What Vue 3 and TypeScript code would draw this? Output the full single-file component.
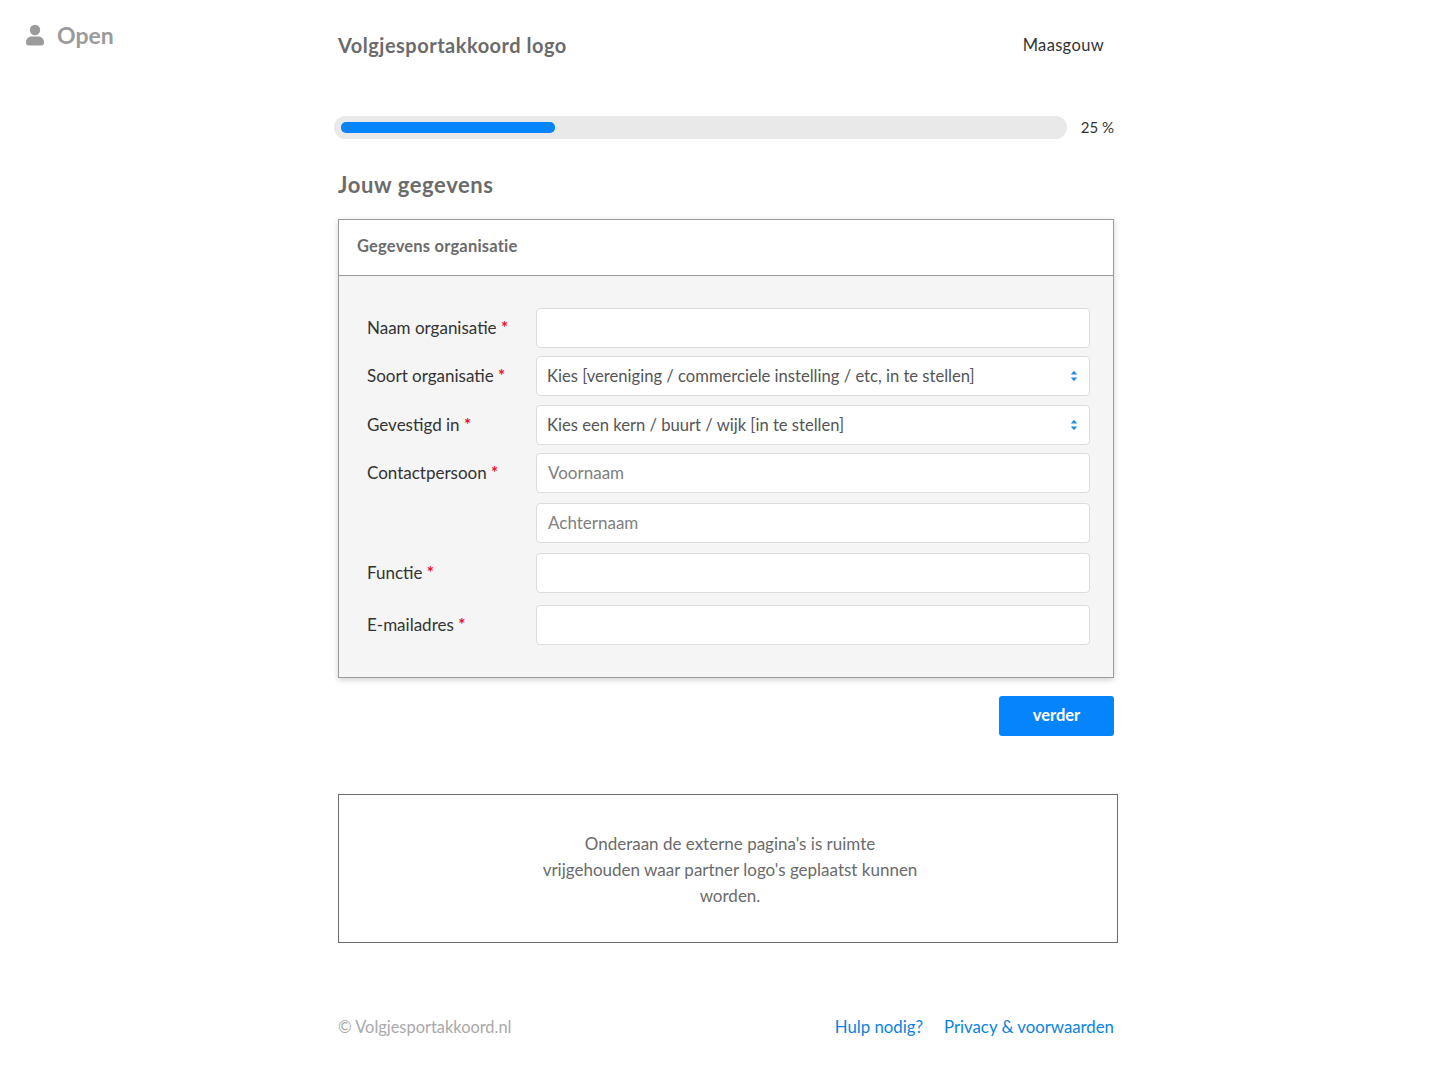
<script setup lang="ts">
interface Field {
  label?: string;
  type: 'text' | 'select';
  placeholder?: string;
  value?: string;
}

const fields: Field[] = [
  { label: 'Naam organisatie', type: 'text' },
  { label: 'Soort organisatie', type: 'select', value: 'Kies [vereniging / commerciele instelling / etc, in te stellen]' },
  { label: 'Gevestigd in', type: 'select', value: 'Kies een kern / buurt / wijk [in te stellen]' },
  { label: 'Contactpersoon', type: 'text', placeholder: 'Voornaam' },
  { type: 'text', placeholder: 'Achternaam' },
  { label: 'Functie', type: 'text' },
  { label: 'E-mailadres', type: 'text' },
];

const progress = 25;
</script>

<template>
  <div class="page">
    <a class="open" href="#">
      <svg class="open-icon" viewBox="0 0 20 22" width="20" height="22">
        <circle cx="10" cy="6" r="5.2" />
        <path d="M1 18.500C1 14.500 4 12.500 6.500 12.500h7c2.500 0 5.500 2 5.500 6v.5c0 1.500-1 2.500-2.500 2.500h-13C2 21.500 1 20.500 1 19z" />
      </svg>
      Open
    </a>

    <div class="wrap">
      <header class="top">
        <span class="logo">Volgjesportakkoord logo</span>
        <span class="region">Maasgouw</span>
      </header>

      <div class="progress-row">
        <div class="progress">
          <div class="progress-bar" :style="{ width: `${progress * 1.19}%` }"></div>
        </div>
        <span class="progress-label">{{ progress }} %</span>
      </div>

      <h1 class="title">Jouw gegevens</h1>

      <section class="card">
        <h2 class="card-head">Gegevens organisatie</h2>
        <form class="card-body" @submit.prevent>
          <div v-for="(field, i) in fields" :key="i" class="row">
            <label class="label">
              <template v-if="field.label">{{ field.label }} <span class="req">*</span></template>
            </label>
            <div v-if="field.type === 'select'" class="select-wrap">
              <select class="control select">
                <option>{{ field.value }}</option>
              </select>
              <svg class="select-arrows" viewBox="0 0 8 12" width="8" height="12">
                <path d="M4 .8 7.200 4.600H.8z" />
                <path d="M4 11.200 .8 7.400h6.400z" />
              </svg>
            </div>
            <input v-else class="control" type="text" :placeholder="field.placeholder" />
          </div>
        </form>
      </section>

      <div class="actions">
        <button class="next" type="button">verder</button>
      </div>

      <div class="partners">
        <p>Onderaan de externe pagina's is ruimte<br />vrijgehouden waar partner logo's geplaatst kunnen<br />worden.</p>
      </div>

      <footer class="foot">
        <span class="copy">© Volgjesportakkoord.nl</span>
        <nav class="foot-links">
          <a href="#">Hulp nodig?</a>
          <a href="#">Privacy &amp; voorwaarden</a>
        </nav>
      </footer>
    </div>
  </div>
</template>

<style>
html, body {
  background: #fff;
}
</style>

<style scoped>
.page {
  position: relative;
  height: 1074px;
  font-family: Lato, "Open Sans", sans-serif;
  font-size: 17px;
  color: #333;
}
.open {
  position: absolute;
  left: 25px;
  top: 23px;
  display: flex;
  align-items: center;
  gap: 12px;
  font-size: 23px;
  line-height: 24px;
  font-weight: 700;
  color: #9b9b9b;
  text-decoration: none;
}
.open-icon {
  fill: #9b9b9b;
}
.wrap {
  width: 776px;
  margin-left: 338px;
}
.top {
  display: flex;
  justify-content: space-between;
  align-items: center;
  height: 90px;
  padding-right: 10px;
  padding-bottom: 2px;
}
.logo {
  font-size: 20px;
  font-weight: 700;
  letter-spacing: 0.5px;
  color: #6b6b6b;
}
.region {
  font-size: 16.500px;
  letter-spacing: 0.35px;
  color: #333;
}
.progress-row {
  display: flex;
  align-items: center;
  margin-left: -4px;
  height: 23px;
  margin-top: 24px;
}
.progress {
  width: 733px;
  height: 23px;
  padding: 6px 7px;
  box-sizing: border-box;
  border-radius: 12px;
  background: #e9e9e9;
}
.progress-bar {
  height: 11px;
  border-radius: 5px;
  background: #0584fb;
}
.progress-label {
  margin-left: auto;
  padding-bottom: 2px;
  font-size: 15px;
  color: #333;
}
.title {
  margin: 32px 0 20px;
  font-size: 22px;
  line-height: 28px;
  font-weight: 700;
  letter-spacing: 0.6px;
  color: #6b6b6b;
}
.card {
  border: 1px solid #9b9b9b;
  box-shadow: 0 2px 6px rgba(0, 0, 0, 0.18);
  background: #f5f5f5;
}
.card-head {
  margin: 0;
  height: 56px;
  box-sizing: border-box;
  padding: 0 18px 4px;
  display: flex;
  align-items: center;
  font-size: 16.500px;
  font-weight: 700;
  letter-spacing: 0.2px;
  color: #6b6b6b;
  background: #fff;
  border-bottom: 1px solid #9b9b9b;
}
.card-body {
  padding: 32px 23px 32px 28px;
}
.row {
  display: flex;
  align-items: center;
}
.row:nth-child(1) { margin-bottom: 8px; }
.row:nth-child(2) { margin-bottom: 9px; }
.row:nth-child(3) { margin-bottom: 8px; }
.row:nth-child(4) { margin-bottom: 10px; }
.row:nth-child(5) { margin-bottom: 10px; }
.row:nth-child(6) { margin-bottom: 12px; }
.label {
  flex: 0 0 169px;
  padding-bottom: 2px;
  font-size: 17px;
  color: #333;
}
.req {
  color: #e8112d;
  font-weight: 700;
}
.select-wrap {
  position: relative;
  flex: 1;
  display: flex;
}
.control {
  flex: 1;
  width: 100%;
  height: 40px;
  box-sizing: border-box;
  padding: 0 11px 2px;
  border: 1px solid #dcdcdc;
  border-radius: 4px;
  background: #fff;
  font: inherit;
  font-size: 17px;
  color: #555;
  outline: none;
}
.control::placeholder {
  color: #808080;
  opacity: 1;
}
.select {
  appearance: none;
  padding: 0 30px 0 10px;
  font-size: 16.600px;
}
.select-arrows {
  position: absolute;
  right: 12px;
  top: 14px;
  fill: #1a8fe3;
  pointer-events: none;
}
.actions {
  display: flex;
  justify-content: flex-end;
  margin-top: 18px;
}
.next {
  width: 115px;
  height: 40px;
  padding: 0 0 2px;
  border: 0;
  border-radius: 3px;
  background: #0584fb;
  color: #fff;
  font: inherit;
  font-size: 16.500px;
  font-weight: 700;
}
.partners {
  width: 780px;
  height: 149px;
  box-sizing: border-box;
  margin-top: 58px;
  padding: 2px 0 0 4px;
  display: flex;
  align-items: center;
  justify-content: center;
  border: 1px solid #6b6b6b;
  text-align: center;
}
.partners p {
  margin: 0;
  font-size: 17px;
  line-height: 26px;
  color: #6b6b6b;
}
.foot {
  display: flex;
  justify-content: space-between;
  align-items: center;
  margin-top: 71px;
  height: 24px;
  font-size: 16.800px;
}
.copy {
  font-size: 16.400px;
  color: #a9a9a9;
}
.foot-links {
  display: flex;
  gap: 21px;
}
.foot-links a {
  color: #0a84e0;
  text-decoration: none;
}
</style>
